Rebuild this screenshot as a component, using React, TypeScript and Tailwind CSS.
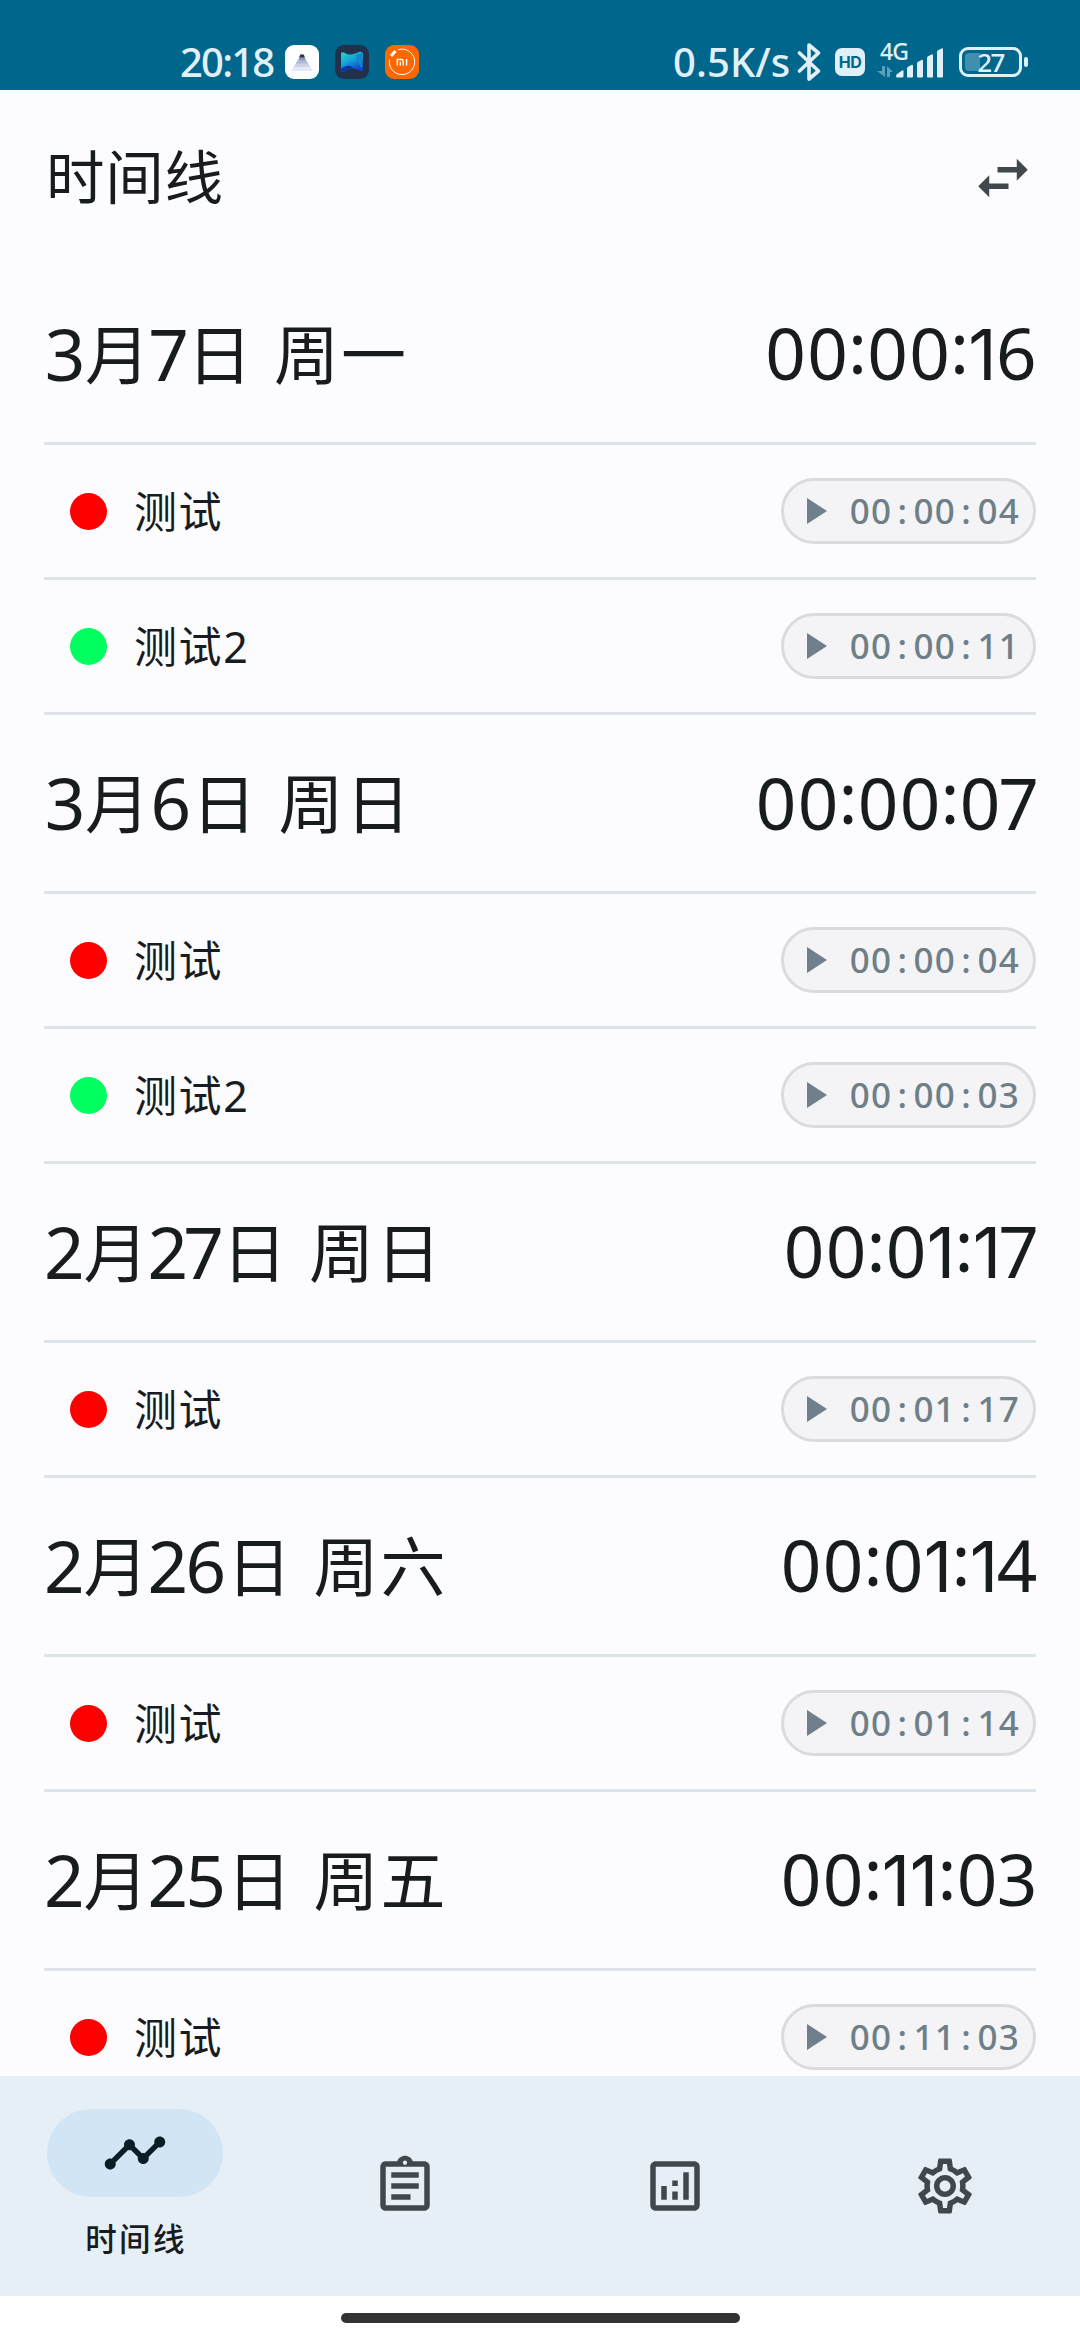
import {
  MdOutlineAnalytics,
  MdOutlineAssignment,
  MdOutlineSettings,
  MdSwapHoriz,
  MdTimeline,
} from "react-icons/md";

type Entry = { name: string; color: string; time: string };
type Day = { date: string; total: string; entries: Entry[] };

const RED = "bg-[#ff0000]";
const GREEN = "bg-[#00ff5f]";

const days: Day[] = [
  {
    date: "3月7日 周一",
    total: "00:00:16",
    entries: [
      { name: "测试", color: RED, time: "00:00:04" },
      { name: "测试2", color: GREEN, time: "00:00:11" },
    ],
  },
  {
    date: "3月6日 周日",
    total: "00:00:07",
    entries: [
      { name: "测试", color: RED, time: "00:00:04" },
      { name: "测试2", color: GREEN, time: "00:00:03" },
    ],
  },
  {
    date: "2月27日 周日",
    total: "00:01:17",
    entries: [{ name: "测试", color: RED, time: "00:01:17" }],
  },
  {
    date: "2月26日 周六",
    total: "00:01:14",
    entries: [{ name: "测试", color: RED, time: "00:01:14" }],
  },
  {
    date: "2月25日 周五",
    total: "00:11:03",
    entries: [{ name: "测试", color: RED, time: "00:11:03" }],
  },
];

// Proportional advance widths for the headline figures.
const advances: Record<string, string> = {
  "0": "w-[42px]",
  "1": "w-[28px] font-['Inter'] text-[70px]",
  "2": "w-[36.500px]",
  "3": "w-[38px]",
  "4": "w-[38px]",
  "5": "w-[39.500px]",
  "6": "w-[39.500px]",
  "7": "w-[35px]",
  ":": "w-[18px] relative -top-[6px]",
  " ": "w-[20px]",
};

function Headline({ text }: { text: string }) {
  return (
    <span className="pb-[2px] text-[71px] leading-none whitespace-pre">
      {text.split("").map((c, i) => (
        <span
          key={i}
          className={`inline-flex justify-center leading-none ${advances[c] ?? "relative -top-[2px] w-[67px] text-[65px]"}`}
        >
          {c}
        </span>
      ))}
    </span>
  );
}

function StatusBar() {
  return (
    <header className="flex h-[90px] shrink-0 items-start bg-[#00668b] pl-[180px] text-[#e1f0f8]">
      <span className="mt-[41px] w-[105px] text-[40px] leading-[42px] font-medium tracking-[-1.800px] whitespace-nowrap">20:18</span>
      <div className="mt-[45px] flex gap-4">
        <svg width="34" height="34" viewBox="0 0 34 34">
          <rect width="34" height="34" rx="9" fill="#fff" />
          <path d="M17 9 28 26H6Z" fill="#e6e9f5" />
          <path d="M17 9 25.4 22H8.6Z" fill="#ccd3e8" />
          <path d="M17 9 23.2 18.6H10.8Z" fill="#b0bad6" />
          <path d="M17 9 21 15.200H13Z" fill="#8d97b8" />
          <path d="M15.300 9.500h3.400l1.300 3h-6Z" fill="#35344a" />
        </svg>
        <svg width="34" height="34" viewBox="0 0 34 34">
          <defs>
            <linearGradient id="wave" x1="0" y1="0" x2="0.6" y2="1">
              <stop offset="0" stopColor="#22dcc8" />
              <stop offset="0.5" stopColor="#16a3d8" />
              <stop offset="1" stopColor="#0a45c8" />
            </linearGradient>
          </defs>
          <rect width="34" height="34" rx="9" fill="#22304a" />
          <path d="M6 9c0-2 2-2 4-1 5 3 9 1 14-1 2-.5 4 0 4 2v15c0 3-2 3-5 1-5-3-9-2-13 1-2 1-4 1-4-1Z" fill="url(#wave)" />
          <path d="M6 24c4-4 8-4 12-2l-8 4c-2 1-4 1-4-2Z" fill="#0634b4" />
          <path d="M27 8v16c-3-4-5-9-6-14Z" fill="#1287c4" />
        </svg>
        <svg width="34" height="34" viewBox="0 0 34 34">
          <rect width="34" height="34" rx="9" fill="#ff6700" />
          <path d="M13 4.800A12.700 12.700 0 1 1 4.500 14.500" fill="none" stroke="#fff" strokeWidth="1" />
          <path d="m6 11 4.500-5" stroke="#fff" strokeWidth="3" />
          <path d="M12.300 20.500v-6h4.200c1.200 0 1.700.7 1.700 1.700v4.300M15.300 16.800v3.700M21.600 14v6.500" fill="none" stroke="#fff" strokeWidth="1.400" />
        </svg>
      </div>
      <span className="mt-[41px] ml-[254px] w-[124px] text-[40px] leading-[42px] font-medium tracking-[0.100px] whitespace-nowrap">0.5K/s</span>
      <svg className="mt-[42px]" width="25" height="40" viewBox="0 0 25 40">
        <path d="m2.500 11 19 18-9.500 8V3l9.500 8-19 18" fill="none" stroke="currentColor" strokeWidth="3.600" strokeLinejoin="round" strokeLinecap="round" />
      </svg>
      <span className="mt-[48px] ml-[13px] flex h-[28px] w-[30px] items-center justify-center rounded-[7px] bg-[#e1f0f8] font-['Inter'] text-[16px] leading-none font-bold tracking-[-0.5px] text-[#00668b]">
        HD
      </span>
      <div className="mt-[42px] ml-[12px] flex w-[68px] flex-col">
        <span className="h-[18px] pl-[3px] text-[23px] leading-[18px] font-medium tracking-[-1px]">4G</span>
        <svg className="-mt-[13px]" width="68" height="31" viewBox="0 0 68 31">
          <g fill="#5d9fba">
            <path d="M5 19h3v11L0 24h5ZM10 30V19l6 6h-3v5Z" />
          </g>
          <g fill="currentColor">
            <path d="M19.500 27.500 25 23.500q1.500-1 1.500.8V29q0 1.500-1.500 1.500h-4.500q-1.500 0-1.500-1.300Z" />
            <path d="M30 21.500q0-1.500 1.500-2l3-1.500q1.500-.8 1.500 1v10.500q0 1-1 1h-4q-1 0-1-1Z" />
            <path d="M40 16.500q0-1.500 1.500-2l3-1.500q1.500-.8 1.500 1v15.500q0 1-1 1h-4q-1 0-1-1Z" />
            <path d="M50 11q0-1.500 1.500-2l3-1.500q1.500-.8 1.500 1v21q0 1-1 1h-4q-1 0-1-1Z" />
            <path d="M60 5q0-1.500 1.500-2l3-1.500q1.500-.8 1.500 1v27q0 1-1 1h-4q-1 0-1-1Z" />
          </g>
        </svg>
      </div>
      <div className="mt-[47px] ml-[14px] flex items-center gap-[2px]">
        <div className="relative flex h-[30px] w-[63px] items-center justify-center rounded-[9px] border-[3px] border-[#e1f0f8] text-[26px] leading-none font-medium tracking-[-1.500px]">
          <span className="absolute top-[3px] left-[3px] h-[18px] w-[15px] rounded-l-[4px] bg-[#3f8fae]" />
          <span className="relative">27</span>
        </div>
        <span className="h-[10px] w-[4px] rounded-full bg-[#e1f0f8]" />
      </div>
    </header>
  );
}

function DurationChip({ time }: { time: string }) {
  return (
    <button className="flex h-[66px] w-[255px] items-center rounded-full border-[3px] border-[#dadbde] bg-[#f4f4f7] pl-[23px] text-[#6f7f87]">
      <svg width="20" height="26" viewBox="0 0 20 26">
        <path d="M0 0v26l20-13Z" fill="#6f7f8b" />
      </svg>
      <span className="ml-[22px] flex pb-[2px] text-[35px] leading-none font-medium">
        {time.split("").map((c, i) => (
          <span key={i} className="w-[21.300px] text-center">
            {c}
          </span>
        ))}
      </span>
    </button>
  );
}

function DaySection({ day }: { day: Day }) {
  return (
    <section className="shrink-0">
      <div className="flex h-[179px] items-center justify-between border-b-[3px] border-[#dce3e9] pl-[2px]">
        <Headline text={day.date} />
        <Headline text={day.total} />
      </div>
      {day.entries.map((entry, i) => (
        <div key={i} className="flex h-[135px] items-center border-b-[3px] border-[#dce3e9] pl-[26px]">
          <span className={`size-[37px] rounded-full ${entry.color}`} />
          <span className="ml-[27px] flex-1 text-[43px] leading-none tracking-[1.600px]">{entry.name}</span>
          <DurationChip time={entry.time} />
        </div>
      ))}
    </section>
  );
}

function BottomNav() {
  return (
    <nav className="grid h-[220px] shrink-0 grid-cols-4 bg-[#e7eff6] text-[#41484d]">
      <div className="flex flex-col items-center pt-[33px]">
        <span className="flex h-[88px] w-[176px] items-center justify-center rounded-full bg-[#d2e5f4] text-[#0a1e28]">
          <MdTimeline size={66} />
        </span>
        <span className="mt-[24px] pl-[2px] text-[31.500px] leading-[36px] font-medium tracking-[2.300px] text-[#191c1e]">时间线</span>
      </div>
      <div className="flex items-center justify-center">
        <MdOutlineAssignment size={66} />
      </div>
      <div className="flex items-center justify-center">
        <MdOutlineAnalytics size={66} />
      </div>
      <div className="flex items-center justify-center">
        <MdOutlineSettings size={66} />
      </div>
    </nav>
  );
}

export default function App() {
  return (
    <div className="flex h-[2340px] w-[1080px] flex-col overflow-hidden bg-[#fcfcff] font-['Noto_Sans','Noto_Sans_CJK_SC',sans-serif] text-[#191c1e]">
      <StatusBar />
      <div className="flex h-[176px] shrink-0 items-center justify-between px-[44px]">
        <h1 className="pb-[4px] pl-[2px] text-[58.500px] leading-none tracking-[0.700px]">时间线</h1>
        <MdSwapHoriz size={66} className="text-[#41484d]" />
      </div>
      <main className="flex min-h-0 flex-1 flex-col overflow-hidden px-[44px]">
        {days.map((day) => (
          <DaySection key={day.date} day={day} />
        ))}
      </main>
      <BottomNav />
      <footer className="flex h-[44px] shrink-0 justify-center bg-white pt-[17px]">
        <span className="h-[10px] w-[399px] rounded-full bg-[#333333]" />
      </footer>
    </div>
  );
}
